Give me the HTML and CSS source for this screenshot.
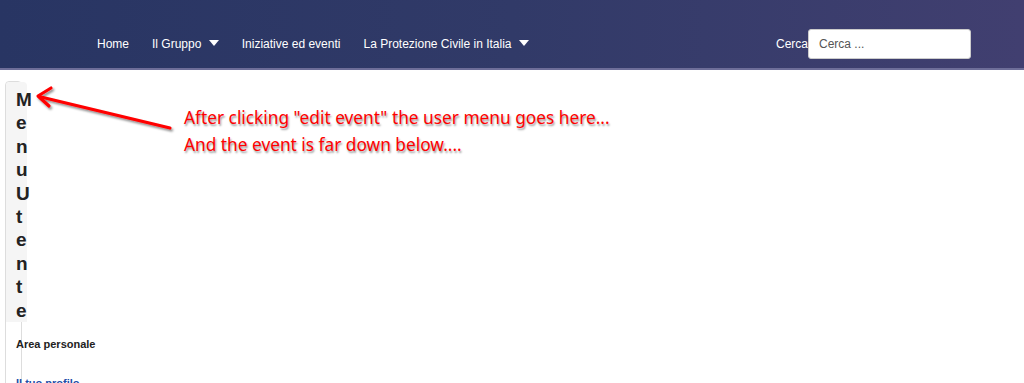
FILE: index.html
```html
<!DOCTYPE html>
<html lang="it">
<head>
    <meta charset="UTF-8">
    <title>Protezione Civile</title>
    <link rel="stylesheet" href="styles.css">
</head>
<body>

    <!-- TOP BAR -->
    <header class="topbar">
        <nav class="main-nav">
            <a href="#">Home</a>
            <a href="#">Il Gruppo <span class="caret"></span></a>
            <a href="#">Iniziative ed eventi</a>
            <a href="#">La Protezione Civile in Italia <span class="caret"></span></a>
        </nav>
        <form class="search">
            <label for="q">Cerca</label>
            <input id="q" type="text" placeholder="Cerca ...">
        </form>
    </header>

    <div class="page">
        <aside class="user-card">
            <h3 class="user-card-title">MenuUtente</h3>
            <div class="user-card-body">
                <h4>Area personale</h4>
                <a href="#">Il tuo profilo</a>
            </div>
        </aside>
    </div>

    <!-- annotation drawn on the screenshot -->
    <svg class="note-arrow" width="200" height="150" viewBox="0 0 200 150">
        <defs>
            <filter id="sh" x="-20%" y="-50%" width="140%" height="200%">
                <feDropShadow dx="1.5" dy="2" stdDeviation="1.2" flood-color="#000" flood-opacity="0.45"/>
            </filter>
        </defs>
        <g filter="url(#sh)" fill="none" stroke="#f00" stroke-width="3.2" stroke-linecap="round" stroke-linejoin="round">
            <line x1="170" y1="128" x2="41" y2="97"/>
            <polyline points="51,88 38,96 49,106"/>
        </g>
    </svg>
    <div class="note">
        <p>After clicking "edit event" the user menu goes here...</p>
        <p>And the event is far down below....</p>
    </div>

</body>
</html>
```

FILE: styles.css
```css
/* --- General --- */
body {
    margin: 0;
    font-family: 'Liberation Sans', Arial, sans-serif;
    color: #333;
    background: #fff;
    overflow: hidden;
}

/* --- Top bar --- */
.topbar {
    height: 68px;
    display: flex;
    align-items: center;
    justify-content: space-between;
    padding: 0 53px 0 97px;
    background: linear-gradient(90deg, #283563 0%, #313a68 50%, #413f70 100%);
    border-bottom: 2px solid #6e6e99;
}

.main-nav {
    display: flex;
    gap: 23px;
    padding-top: 19px;
}
.main-nav a {
    color: #fff;
    text-decoration: none;
    font-size: 12px;
}
.caret {
    display: inline-block;
    width: 0;
    height: 0;
    margin-left: 4px;
    vertical-align: 2px;
    border-left: 5px solid transparent;
    border-right: 5px solid transparent;
    border-top: 6px solid #fff;
}

.search {
    display: flex;
    align-items: center;
    padding-top: 19px;
}
.search label {
    color: #fff;
    font-size: 12px;
}
.search input {
    width: 163px;
    height: 30px;
    box-sizing: border-box;
    border: 1px solid #ccc;
    border-radius: 3px;
    padding: 0 10px;
    font-family: inherit;
    font-size: 12px;
    background: #fff;
}
.search input::placeholder {
    color: #555;
}

/* --- User menu card --- */
.page {
    padding: 11px 5px;
}
.user-card {
    width: 15px;
    border: 1px solid #ddd;
    border-radius: 4px;
    min-height: 400px;
}
.user-card-title {
    width: 11px;
    margin: 0;
    padding: 6px 0 0 10px;
    background: #f5f5f5;
    border-radius: 4px 4px 0 0;
    font-size: 19px;
    line-height: 23.4px;
    font-weight: bold;
    color: #222;
    word-break: break-all;
}
.user-card-body {
    padding: 16px 10px;
}
.user-card-body h4 {
    margin: 0 0 23px;
    font-size: 11px;
    white-space: nowrap;
    color: #222;
}
.user-card-body a {
    font-size: 11px;
    font-weight: bold;
    color: #1f4fa8;
    white-space: nowrap;
}

/* --- Annotation overlay --- */
.note-arrow {
    position: absolute;
    top: 0;
    left: 0;
}
.note {
    position: absolute;
    top: 104px;
    left: 184px;
    font-family: 'Noto Sans', sans-serif;
    font-size: 17.3px;
    color: #f00;
    text-shadow: 1px 2px 2px rgba(0, 0, 0, 0.4);
}
.note p {
    margin: 0;
    line-height: 27px;
}
```
